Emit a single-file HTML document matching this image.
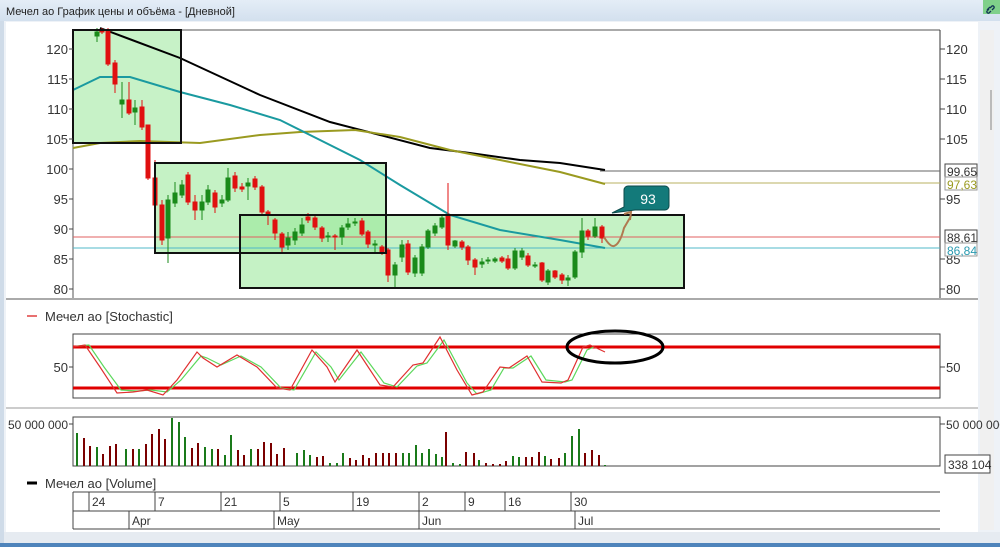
<!DOCTYPE html>
<html><head><meta charset="utf-8"><style>
html,body{margin:0;padding:0;background:#fff;}
svg{display:block;font-family:"Liberation Sans","DejaVu Sans",sans-serif;}
</style></head><body>
<svg width="1000" height="547" viewBox="0 0 1000 547" xmlns="http://www.w3.org/2000/svg">
<defs><linearGradient id="tb" x1="0" y1="0" x2="0" y2="1"><stop offset="0" stop-color="#e4edf7"/><stop offset="1" stop-color="#d3e0ee"/></linearGradient></defs>
<rect width="1000" height="547" fill="#eef2f7"/>
<rect x="0" y="0" width="1000" height="21" fill="url(#tb)"/>
<text x="6" y="15" font-size="11" fill="#222">Мечел ао График цены и объёма - [Дневной]</text>
<rect x="983" y="0" width="17" height="14" fill="#7fd08a"/>
<path d="M987 10 l3-3 M990 8 l2-2 a1.5 1.5 0 0 1 2 2 l-2 2 M989 9 l-2 2 a1.5 1.5 0 0 0 2 2 l2-2" stroke="#135" stroke-width="1.3" fill="none"/>
<rect x="6" y="22" width="972" height="510" fill="#fff"/>
<rect x="980" y="30" width="14" height="500" fill="#f0f0f0"/>
<line x1="991" y1="90" x2="991" y2="130" stroke="#bbb" stroke-width="2"/>
<rect x="0" y="532" width="1000" height="15" fill="#e6ebf1"/>
<rect x="0" y="543" width="1000" height="4" fill="#4f84bb"/>
<rect x="0" y="21" width="4" height="522" fill="#cfdbe8"/>

<!-- PRICE PANEL -->
<g>
<rect x="73" y="30" width="108" height="113" fill="#c7f2c7"/>
<rect x="155" y="163" width="231" height="90" fill="rgba(150,232,150,0.55)"/>
<rect x="240" y="215" width="444" height="73" fill="rgba(150,232,150,0.55)"/>
<line x1="73" y1="30" x2="940" y2="30" stroke="#555" stroke-width="1"/>
<line x1="73" y1="30" x2="73" y2="298" stroke="#555" stroke-width="1"/>
<line x1="940" y1="30" x2="940" y2="298" stroke="#333" stroke-width="1"/>
<line x1="6" y1="299" x2="978" y2="299" stroke="#aaa" stroke-width="2"/>
<line x1="600" y1="171" x2="940" y2="171" stroke="#666"/>
<line x1="600" y1="183" x2="940" y2="183" stroke="#b8b060"/>
<line x1="73" y1="237" x2="940" y2="237" stroke="#e06060"/>
<line x1="73" y1="248" x2="940" y2="248" stroke="#50b8c8"/>
<polyline fill="none" stroke="#000" stroke-width="2" points="100,28 180,58 260,95 330,122 380,135 430,148 470,153 520,160 560,163 605,170"/>
<polyline fill="none" stroke="#9a9a20" stroke-width="2" points="73,148 100,143 140,141 200,143 260,135 300,132 355,130 400,137 450,150 500,160 560,172 605,184"/>
<polyline fill="none" stroke="#1a9aa0" stroke-width="2" points="73,90 100,77 130,77 180,92 230,105 280,120 320,140 360,160 400,185 450,215 500,230 560,240 605,248"/>
<g stroke-width="1">
<g fill="#e01010" stroke="#e01010">
<line x1="102" y1="28" x2="102" y2="34"/><rect x="100" y="30" width="4" height="2"/>
<line x1="108" y1="28" x2="108" y2="66"/><rect x="106" y="30" width="4" height="34"/>
<line x1="115" y1="60" x2="115" y2="93"/><rect x="113" y="63" width="4" height="21"/>
<line x1="129" y1="82" x2="129" y2="115"/><rect x="127" y="100" width="4" height="13"/>
<line x1="142" y1="100" x2="142" y2="130"/><rect x="140" y="107" width="4" height="20"/>
<line x1="148" y1="125" x2="148" y2="180"/><rect x="146" y="125" width="4" height="53"/>
<line x1="155" y1="160" x2="155" y2="210"/><rect x="153" y="178" width="4" height="27"/>
<line x1="162" y1="200" x2="162" y2="245"/><rect x="160" y="205" width="4" height="35"/>
<line x1="188" y1="172" x2="188" y2="205"/><rect x="186" y="175" width="4" height="27"/>
<line x1="195" y1="195" x2="195" y2="220"/><rect x="193" y="202" width="4" height="8"/>
<line x1="215" y1="190" x2="215" y2="213"/><rect x="213" y="193" width="4" height="14"/>
<line x1="235" y1="172" x2="235" y2="192"/><rect x="233" y="176" width="4" height="12"/>
<line x1="242" y1="183" x2="242" y2="192"/><rect x="240" y="187" width="4" height="2"/>
<line x1="255" y1="176" x2="255" y2="190"/><rect x="253" y="179" width="4" height="8"/>
<line x1="262" y1="185" x2="262" y2="215"/><rect x="260" y="187" width="4" height="25"/>
<line x1="268" y1="210" x2="268" y2="225"/><rect x="266" y="212" width="4" height="3"/>
<line x1="275" y1="218" x2="275" y2="240"/><rect x="273" y="220" width="4" height="13"/>
<line x1="282" y1="232" x2="282" y2="253"/><rect x="280" y="234" width="4" height="13"/>
<line x1="308" y1="213" x2="308" y2="223"/><rect x="306" y="217" width="4" height="3"/>
<line x1="315" y1="215" x2="315" y2="230"/><rect x="313" y="218" width="4" height="9"/>
<line x1="322" y1="226" x2="322" y2="242"/><rect x="320" y="228" width="4" height="10"/>
<line x1="335" y1="234" x2="335" y2="250"/><rect x="333" y="236" width="4" height="1"/>
<line x1="362" y1="218" x2="362" y2="236"/><rect x="360" y="221" width="4" height="13"/>
<line x1="368" y1="230" x2="368" y2="248"/><rect x="366" y="232" width="4" height="12"/>
<line x1="382" y1="245" x2="382" y2="255"/><rect x="380" y="247" width="4" height="5"/>
<line x1="388" y1="248" x2="388" y2="282"/><rect x="386" y="250" width="4" height="25"/>
<line x1="408" y1="240" x2="408" y2="275"/><rect x="406" y="244" width="4" height="28"/>
<line x1="448" y1="183" x2="448" y2="250"/><rect x="446" y="215" width="4" height="30"/>
<line x1="462" y1="240" x2="462" y2="250"/><rect x="460" y="242" width="4" height="5"/>
<line x1="468" y1="245" x2="468" y2="265"/><rect x="466" y="247" width="4" height="13"/>
<line x1="475" y1="258" x2="475" y2="275"/><rect x="473" y="260" width="4" height="7"/>
<line x1="502" y1="256" x2="502" y2="263"/><rect x="500" y="258" width="4" height="3"/>
<line x1="508" y1="255" x2="508" y2="270"/><rect x="506" y="259" width="4" height="9"/>
<line x1="528" y1="253" x2="528" y2="267"/><rect x="526" y="256" width="4" height="9"/>
<line x1="542" y1="262" x2="542" y2="282"/><rect x="540" y="263" width="4" height="17"/>
<line x1="555" y1="270" x2="555" y2="279"/><rect x="553" y="271" width="4" height="6"/>
<line x1="562" y1="273" x2="562" y2="284"/><rect x="560" y="275" width="4" height="5"/>
<line x1="588" y1="229" x2="588" y2="240"/><rect x="586" y="231" width="4" height="5"/>
<line x1="602" y1="225" x2="602" y2="243"/><rect x="600" y="227" width="4" height="11"/>
</g>
<g fill="#1a8a1a" stroke="#1a8a1a">
<line x1="97" y1="28" x2="97" y2="42"/><rect x="95" y="32" width="4" height="4"/>
<line x1="122" y1="82" x2="122" y2="118"/><rect x="120" y="100" width="4" height="4"/>
<line x1="135" y1="100" x2="135" y2="125"/><rect x="133" y="108" width="4" height="4"/>
<line x1="168" y1="195" x2="168" y2="263"/><rect x="166" y="200" width="4" height="38"/>
<line x1="175" y1="182" x2="175" y2="207"/><rect x="173" y="193" width="4" height="10"/>
<line x1="182" y1="180" x2="182" y2="198"/><rect x="180" y="185" width="4" height="10"/>
<line x1="202" y1="195" x2="202" y2="220"/><rect x="200" y="202" width="4" height="8"/>
<line x1="208" y1="185" x2="208" y2="205"/><rect x="206" y="190" width="4" height="12"/>
<line x1="222" y1="195" x2="222" y2="207"/><rect x="220" y="200" width="4" height="3"/>
<line x1="228" y1="168" x2="228" y2="202"/><rect x="226" y="178" width="4" height="22"/>
<line x1="248" y1="178" x2="248" y2="200"/><rect x="246" y="183" width="4" height="3"/>
<line x1="288" y1="232" x2="288" y2="250"/><rect x="286" y="238" width="4" height="7"/>
<line x1="295" y1="228" x2="295" y2="245"/><rect x="293" y="232" width="4" height="8"/>
<line x1="302" y1="218" x2="302" y2="236"/><rect x="300" y="225" width="4" height="8"/>
<line x1="328" y1="232" x2="328" y2="242"/><rect x="326" y="236" width="4" height="1"/>
<line x1="342" y1="225" x2="342" y2="245"/><rect x="340" y="228" width="4" height="9"/>
<line x1="348" y1="218" x2="348" y2="230"/><rect x="346" y="224" width="4" height="3"/>
<line x1="355" y1="218" x2="355" y2="226"/><rect x="353" y="222" width="4" height="1"/>
<line x1="375" y1="240" x2="375" y2="253"/><rect x="373" y="244" width="4" height="1"/>
<line x1="395" y1="262" x2="395" y2="288"/><rect x="393" y="265" width="4" height="10"/>
<line x1="402" y1="240" x2="402" y2="262"/><rect x="400" y="245" width="4" height="12"/>
<line x1="415" y1="255" x2="415" y2="277"/><rect x="413" y="258" width="4" height="15"/>
<line x1="422" y1="244" x2="422" y2="276"/><rect x="420" y="247" width="4" height="26"/>
<line x1="428" y1="229" x2="428" y2="249"/><rect x="426" y="231" width="4" height="16"/>
<line x1="435" y1="223" x2="435" y2="236"/><rect x="433" y="226" width="4" height="7"/>
<line x1="442" y1="215" x2="442" y2="229"/><rect x="440" y="218" width="4" height="9"/>
<line x1="455" y1="240" x2="455" y2="248"/><rect x="453" y="241" width="4" height="5"/>
<line x1="482" y1="258" x2="482" y2="268"/><rect x="480" y="262" width="4" height="2"/>
<line x1="488" y1="257" x2="488" y2="264"/><rect x="486" y="260" width="4" height="1"/>
<line x1="495" y1="257" x2="495" y2="263"/><rect x="493" y="259" width="4" height="2"/>
<line x1="515" y1="248" x2="515" y2="270"/><rect x="513" y="251" width="4" height="17"/>
<line x1="522" y1="248" x2="522" y2="260"/><rect x="520" y="251" width="4" height="6"/>
<line x1="535" y1="262" x2="535" y2="268"/><rect x="533" y="265" width="4" height="1"/>
<line x1="548" y1="269" x2="548" y2="285"/><rect x="546" y="271" width="4" height="11"/>
<line x1="568" y1="275" x2="568" y2="286"/><rect x="566" y="278" width="4" height="2"/>
<line x1="575" y1="250" x2="575" y2="279"/><rect x="573" y="252" width="4" height="25"/>
<line x1="582" y1="218" x2="582" y2="258"/><rect x="580" y="231" width="4" height="21"/>
<line x1="595" y1="218" x2="595" y2="238"/><rect x="593" y="227" width="4" height="9"/>
</g>
</g>
<g fill="none" stroke="#111" stroke-width="2">
<rect x="73" y="30" width="108" height="113"/>
<rect x="155" y="163" width="231" height="90"/>
<rect x="240" y="215" width="444" height="73"/>
</g>
<path d="M604 237 q6 10 10 9 q6-2 10-18 l7-12 M624 214 l7-2 l-1 8" fill="none" stroke="#b07a50" stroke-width="2"/>
<path d="M629 186 h36 a4 4 0 0 1 4 4 v16 a4 4 0 0 1 -4 4 h-30 l-23 3 l12-6 v-17 a4 4 0 0 1 4 -4z" fill="#137a7a" stroke="#0b4a4a" stroke-width="1"/>
<text x="648" y="204" font-size="14" fill="#fff" text-anchor="middle">93</text>
<g font-size="13" fill="#333" text-anchor="end">
<text x="68" y="54">120</text><text x="68" y="84">115</text><text x="68" y="114">110</text><text x="68" y="144">105</text><text x="68" y="174">100</text><text x="68" y="204">95</text><text x="68" y="234">90</text><text x="68" y="264">85</text><text x="68" y="294">80</text>
</g>
<g stroke="#444">
<line x1="69" y1="49" x2="73" y2="49"/><line x1="69" y1="79" x2="73" y2="79"/><line x1="69" y1="109" x2="73" y2="109"/><line x1="69" y1="139" x2="73" y2="139"/><line x1="69" y1="169" x2="73" y2="169"/><line x1="69" y1="199" x2="73" y2="199"/><line x1="69" y1="229" x2="73" y2="229"/><line x1="69" y1="259" x2="73" y2="259"/><line x1="69" y1="289" x2="73" y2="289"/>
<line x1="940" y1="49" x2="945" y2="49"/><line x1="940" y1="79" x2="945" y2="79"/><line x1="940" y1="109" x2="945" y2="109"/><line x1="940" y1="139" x2="945" y2="139"/><line x1="940" y1="199" x2="945" y2="199"/><line x1="940" y1="259" x2="945" y2="259"/><line x1="940" y1="289" x2="945" y2="289"/>
</g>
<g font-size="13" fill="#333">
<text x="946" y="54">120</text><text x="946" y="84">115</text><text x="946" y="114">110</text><text x="946" y="144">105</text><text x="946" y="204">95</text><text x="946" y="264">85</text><text x="946" y="294">80</text>
</g>
<rect x="945" y="164" width="32" height="13" fill="#fff" stroke="#444"/><text x="947" y="176" font-size="12" fill="#333">99,65</text>
<rect x="945" y="177" width="32" height="13" fill="#fff" stroke="#999"/><text x="947" y="189" font-size="12" fill="#9a9a20">97,63</text>
<rect x="945" y="230" width="32" height="13" fill="#fff" stroke="#444"/><text x="947" y="242" font-size="12" fill="#333">88,61</text>
<rect x="945" y="243" width="32" height="13" fill="#fff" stroke="#999"/><text x="947" y="255" font-size="12" fill="#2a9ab0">86,84</text>
</g>

<!-- STOCHASTIC -->
<line x1="27" y1="316" x2="37" y2="316" stroke="#e04040" stroke-width="1.5"/>
<text x="45" y="321" font-size="13" fill="#333">Мечел ао [Stochastic]</text>
<rect x="73" y="334" width="867" height="64" fill="#fff" stroke="#444"/>
<line x1="73" y1="347" x2="940" y2="347" stroke="#e00000" stroke-width="3"/>
<line x1="73" y1="388" x2="940" y2="388" stroke="#e00000" stroke-width="3"/>
<polyline fill="none" stroke="#5cd85c" stroke-width="1.2" points="77,346 89,345 104,367 121,390 137,391 151,390 167,392 181,380 201,356 207,358 221,365 241,356 261,367 281,388 294,390 316,352 331,367 339,380 361,352 384,383 397,387 417,366 427,363 444,340 467,383 477,394 491,390 504,368 513,368 531,356 546,380 565,382 572,380 587,350 594,347"/>
<polyline fill="none" stroke="#e03030" stroke-width="1.2" points="73,347 85,345 100,367 117,393 133,392 147,390 163,395 177,380 197,352 203,358 217,367 237,355 257,367 277,388 290,390 312,350 327,367 335,382 357,350 380,385 393,387 413,365 423,363 440,337 457,370 472,395 483,392 500,367 509,368 527,356 542,382 561,383 568,380 583,347 590,345 605,352"/>
<ellipse cx="615" cy="347" rx="48" ry="16" fill="none" stroke="#000" stroke-width="3"/>
<text x="68" y="372" font-size="13" fill="#333" text-anchor="end">50</text>
<text x="946" y="372" font-size="13" fill="#333">50</text>
<line x1="69" y1="367" x2="73" y2="367" stroke="#444"/><line x1="940" y1="367" x2="945" y2="367" stroke="#444"/>
<line x1="6" y1="408" x2="978" y2="408" stroke="#ccc" stroke-width="2"/>

<!-- VOLUME -->
<rect x="73" y="417" width="867" height="49" fill="#fff" stroke="#444"/>
<g stroke-width="2">
<path stroke="#1a7a1a" d="M77 466V433M97 466V447M126 466V449M139 466V449M172 466V418M179 466V422M185 466V437M205 466V447M212 466V449M225 466V455M231 466V435M251 466V449M297 466V453M304 466V450M310 466V455M330 466V463M337 466V463M343 466V453M403 466V453M409 466V453M416 466V445M422 466V453M429 466V449M436 466V454M442 466V457M453 466V463M460 466V464M479 466V460M513 466V456M519 466V457M545 466V456M565 466V453M572 466V436M579 466V429M605 466V465"/>
<path stroke="#7a0000" d="M84 466V438M90 466V446M103 466V454M110 466V446M116 466V444M133 466V449M146 466V444M152 466V434M159 466V429M165 466V439M192 466V448M198 466V443M218 466V449M238 466V450M244 466V455M258 466V449M264 466V442M271 466V443M277 466V454M284 466V448M317 466V457M323 466V456M350 466V458M356 466V460M363 466V455M369 466V458M376 466V453M383 466V453M389 466V453M396 466V453M446 466V432M466 466V452M474 466V453M486 466V463M493 466V464M500 466V464M506 466V461M526 466V457M532 466V457M539 466V452M551 466V459M559 466V458M585 466V453M592 466V450M599 466V455"/>
</g>
<text x="68" y="429" font-size="12" fill="#333" text-anchor="end">50 000 000</text>
<line x1="69" y1="424" x2="73" y2="424" stroke="#444"/><line x1="940" y1="424" x2="945" y2="424" stroke="#444"/>
<text x="946" y="429" font-size="12" fill="#333">50 000 000</text>
<rect x="945" y="455" width="45" height="18" fill="#fff" stroke="#444"/>
<text x="948" y="469" font-size="12" fill="#333">338 104</text>

<!-- Legend / dates -->
<line x1="27" y1="483" x2="37" y2="483" stroke="#000" stroke-width="3"/>
<text x="45" y="488" font-size="13" fill="#333">Мечел ао [Volume]</text>
<g stroke="#444" fill="none">
<line x1="73" y1="492" x2="940" y2="492"/><line x1="73" y1="511" x2="940" y2="511"/><line x1="73" y1="529" x2="940" y2="529"/>
<line x1="73" y1="492" x2="73" y2="529"/>
<path d="M89 492V511M155 492V511M221 492V511M280 492V511M353 492V511M419 492V511M465 492V511M505 492V511M571 492V511M129 511V529M274 511V529M419 511V529M575 511V529"/>
</g>
<g font-size="12" fill="#333">
<text x="92" y="506">24</text><text x="158" y="506">7</text><text x="224" y="506">21</text><text x="283" y="506">5</text><text x="356" y="506">19</text><text x="422" y="506">2</text><text x="468" y="506">9</text><text x="508" y="506">16</text><text x="574" y="506">30</text>
<text x="132" y="525">Apr</text><text x="277" y="525">May</text><text x="422" y="525">Jun</text><text x="578" y="525">Jul</text>
</g>
</svg>
</body></html>
